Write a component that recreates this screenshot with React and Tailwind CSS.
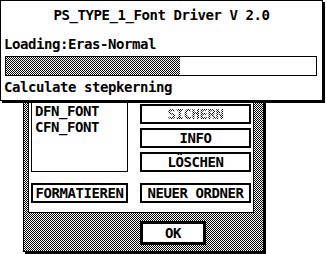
import React from 'react';

// 1px black/white checker, the GEM "gray"
const dither = 'bg-[repeating-conic-gradient(#000_0_25%,#fff_0_50%)] bg-[length:2px_2px]';

const Button = ({ children, disabled }) => (
  <div className="flex h-5 items-center justify-center border-2 border-black bg-white">
    {disabled ? (
      <span className="bg-[repeating-conic-gradient(#000_0_25%,#fff_0_50%)] bg-[length:2px_2px] bg-clip-text text-transparent">
        {children}
      </span>
    ) : (
      <span>{children}</span>
    )}
  </div>
);

const FileDialog = () => {
  const files = ['DFN_FONT', 'CFN_FONT'];

  return (
    <div className={`flex h-[192px] w-[241px] flex-col border border-black pt-[4px] pl-[4px] pr-[9px] shadow-[2px_2px_0_#000] ${dither}`}>
      <div className="grid grid-cols-[97px_111px] gap-x-[12px] gap-y-[11px] border border-black bg-white px-[2px] pt-[2px] pb-[9px]">
        {/* file list */}
        <div className="h-[104px] border border-black pt-[34px] pl-[3px]">
          {files.map(f => (
            <div key={f} className="h-4">{f}</div>
          ))}
        </div>
        {/* actions */}
        <div className="flex flex-col justify-end gap-1">
          <Button disabled>SICHERN</Button>
          <Button>INFO</Button>
          <Button>LÖSCHEN</Button>
        </div>
        <Button>FORMATIEREN</Button>
        <Button>NEUER ORDNER</Button>
      </div>
      <div className="mt-[8px] ml-[112px] flex h-6 w-[66px] items-center justify-center border-[3px] border-black bg-white">
        OK
      </div>
    </div>
  );
};

const ProgressDialog = ({ progress = 174 }) => (
  <div className="absolute top-0 left-0 z-10 h-[101px] w-[323px] border border-black bg-white pt-[6px] shadow-[2px_2px_0_#000]">
    <div className="h-4 text-center">PS_TYPE_1_Font Driver V 2.0</div>
    <div className="mt-[13px] h-4 pl-[3px]">Loading:Eras-Normal</div>
    <div className="mt-[4px] ml-[4px] h-5 w-[312px] border border-black">
      <div className={`h-full ${dither}`} style={{ width: progress }} />
    </div>
    <div className="mt-[3px] h-4 pl-[3px]">Calculate stepkerning</div>
  </div>
);

export default function App() {
  return (
    <div className="relative h-[254px] w-[326px] overflow-hidden bg-white pt-[60px] pl-[23px] font-['DejaVu_Sans_Mono',monospace] text-[14px] leading-4 font-bold tracking-[-0.43px] text-black">
      <FileDialog />
      <ProgressDialog />
    </div>
  );
}
